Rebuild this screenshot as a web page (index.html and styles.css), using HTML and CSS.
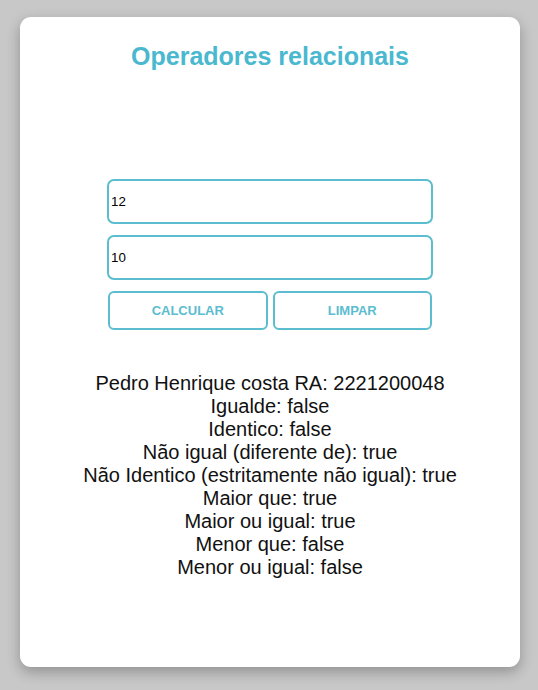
FILE: index.html
```html
<!DOCTYPE html>
<html lang="pt-BR">
<head>
<meta charset="utf-8">
<title>Operadores relacionais</title>
<link rel="stylesheet" href="styles.css">
</head>
<body>
<div class="card">
  <h1 class="title">Operadores relacionais</h1>
  <div class="form">
    <input class="field" type="text" value="12">
    <input class="field" type="text" value="10">
    <div class="buttons">
      <button class="btn" type="button">CALCULAR</button>
      <button class="btn" type="button">LIMPAR</button>
    </div>
  </div>
  <div class="results">
    <div>Pedro Henrique costa RA: 2221200048</div>
    <div>Igualde: false</div>
    <div>Identico: false</div>
    <div>Não igual (diferente de): true</div>
    <div>Não Identico (estritamente não igual): true</div>
    <div>Maior que: true</div>
    <div>Maior ou igual: true</div>
    <div>Menor que: false</div>
    <div>Menor ou igual: false</div>
  </div>
</div>
</body>
</html>
```
FILE: styles.css
```css
html, body {
  margin: 0;
  padding: 0;
}
body {
  background: #c8c8c8;
  padding-top: 17px;
  font-family: "Liberation Sans", Arial, sans-serif;
  height: 690px;
  box-sizing: border-box;
  overflow: hidden;
}
.card {
  width: 500px;
  height: 650px;
  margin-left: 20px;
  background: #ffffff;
  border-radius: 11px;
  box-shadow: 0 5px 14px rgba(0, 0, 0, 0.28);
  padding-top: 25px;
  box-sizing: border-box;
}
.title {
  margin: 0;
  font-size: 25px;
  font-weight: bold;
  color: #4ab8cf;
  text-align: center;
}
.form {
  width: 326px;
  margin: 108px auto 0;
}
.field {
  display: block;
  width: 100%;
  height: 45px;
  box-sizing: border-box;
  border: 2px solid #5bbdcf;
  border-radius: 7px;
  padding: 0 2px;
  margin: 0 0 11px;
  font-family: "Liberation Sans", Arial, sans-serif;
  font-size: 13.33px;
  color: #000;
  background: #fff;
  outline: none;
}
.buttons {
  display: flex;
  gap: 5px;
  padding: 0 1px;
}
.btn {
  flex: 1;
  height: 39px;
  box-sizing: border-box;
  background: #fff;
  border: 2px solid #5bbdcf;
  border-radius: 6px;
  font-family: "Liberation Sans", Arial, sans-serif;
  font-size: 13px;
  font-weight: bold;
  color: #5bbdcf;
  padding: 0;
}
.results {
  margin-top: 42px;
  font-size: 20px;
  color: #111;
  text-align: center;
}
```
